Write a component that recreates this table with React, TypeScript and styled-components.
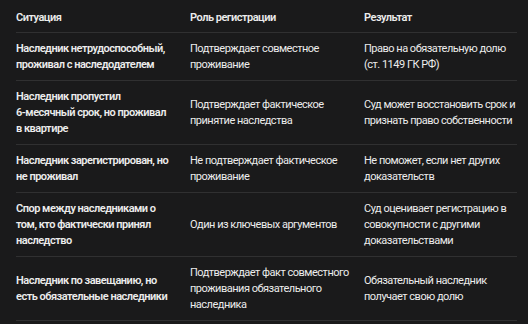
import React from 'react'
import styled, { createGlobalStyle } from 'styled-components'

type Row = {
  situation: string
  role: string
  result: string
}

const rows: Array<Row> = [
  {
    situation: 'Наследник нетрудоспособный, проживал с наследодателем',
    role: 'Подтверждает совместное проживание',
    result: 'Право на обязательную долю (ст. 1149 ГК РФ)'
  },
  {
    situation: 'Наследник пропустил 6\u2011месячный срок, но проживал в квартире',
    role: 'Подтверждает фактическое принятие наследства',
    result: 'Суд может восстановить срок и признать право собственности'
  },
  {
    situation: 'Наследник зарегистрирован, но не проживал',
    role: 'Не подтверждает фактическое проживание',
    result: 'Не поможет, если нет других доказательств'
  },
  {
    situation: 'Спор между наследниками о том, кто фактически принял наследство',
    role: 'Один из ключевых аргументов',
    result: 'Суд оценивает регистрацию в совокупности с другими доказательствами'
  },
  {
    situation: 'Наследник по завещанию, но есть обязательные наследники',
    role: 'Подтверждает факт совместного проживания обязательного наследника',
    result: 'Обязательный наследник получает свою долю'
  }
]

const GlobalStyle = createGlobalStyle`
  html, body {
    margin: 0;
    padding: 0;
    background: #1a1a1b;
  }

  body {
    font-family: Roboto, 'Noto Sans', sans-serif;
    color: #ececec;
  }
`

const Table = styled.div`
  display: grid;
  grid-template-columns: 174px 174px 153px;
  margin: 0 0 0 16px;
  width: 501px;
`

const Cell = styled.div<{ $bold?: boolean; $head?: boolean }>`
  display: flex;
  align-items: center;
  padding: ${({ $head }) => ($head ? '10px 12px 6px 0' : '8px 12px 7px 0')};
  border-bottom: 1px solid #303031;
  font-size: 11px;
  line-height: 16px;
  letter-spacing: -0.5px;
  font-weight: ${({ $bold }) => ($bold ? 600 : 400)};

  &:nth-child(3n + 1) {
    padding-right: 18px;
  }

  &:nth-child(3n) {
    padding-right: 0;
  }
`

export default function App (): JSX.Element {
  return (
    <>
      <GlobalStyle />
      <Table>
        <Cell $head $bold>Ситуация</Cell>
        <Cell $head $bold>Роль регистрации</Cell>
        <Cell $head $bold>Результат</Cell>
        {rows.map(({ situation, role, result }, index) => (
          <React.Fragment key={`row-${index}`}>
            <Cell $bold>{situation}</Cell>
            <Cell>{role}</Cell>
            <Cell>{result}</Cell>
          </React.Fragment>
        ))}
      </Table>
    </>
  )
}
